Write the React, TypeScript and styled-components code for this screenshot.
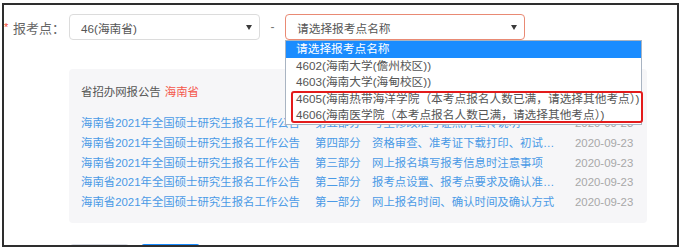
import React from "react";
import styled, { createGlobalStyle } from "styled-components";

const GlobalStyle = createGlobalStyle`
  body {
    margin:0;
    background:#fff;
    font-family:"Liberation Sans", "Noto Sans CJK SC", sans-serif;
  }
`;

const Page = styled.div`
  padding:3px 4px 5px 2px;
`;

const Frame = styled.div`
  box-sizing:border-box;
  width:677px;
  height:244px;
  border:2px solid #2e2e2e;
  overflow:hidden;
  position:relative;
`;

const FormRow = styled.div`
  display:flex;
  align-items:center;
  margin-top:9px;
  height:26px;
`;

const Label = styled.div`
  width:65px;
  display:flex;
  align-items:center;
  font-size:13px;
  color:#666;
`;

const Star = styled.span`
  color:#f2462f;
  font-size:11px;
  width:9px;
  margin-top:-1px;
`;

const SelectWrap = styled.div<{ width: number }>`
  position:relative;
  width:${({ width }) => width}px;
`;

const SelectBox = styled.div<{ focused?: boolean }>`
  box-sizing:border-box;
  height:26px;
  border:1px solid ${({ focused }) => (focused ? "#e98a74" : "#dcdcdc")};
  border-radius:4px;
  display:flex;
  align-items:center;
  justify-content:space-between;
  padding:0 7px 0 11px;
  font-size:11.7px;
  color:#555;
  background:#fff;
`;

const Arrow = styled.span`
  width:0;
  height:0;
  border-left:3px solid transparent;
  border-right:3px solid transparent;
  border-top:5px solid #3a3a3a;
`;

const Dash = styled.span`
  width:25px;
  text-align:center;
  color:#777;
  font-size:12px;
`;

const DropList = styled.ul`
  position:absolute;
  left:0;
  top:26px;
  width:357px;
  margin:0;
  padding:0;
  list-style:none;
  background:#fff;
  border:1px solid #a9b4c2;
  box-sizing:border-box;
  z-index:5;
`;

const DropItem = styled.li<{ active?: boolean }>`
  height:16.5px;
  line-height:16.5px;
  padding-left:10px;
  font-size:11.7px;
  white-space:nowrap;
  color:${({ active }) => (active ? "#fff" : "#555")};
  background:${({ active }) => (active ? "#1a8cff" : "transparent")};
`;

const Highlight = styled.div`
  position:absolute;
  left:5px;
  top:50px;
  width:352px;
  height:32px;
  box-sizing:border-box;
  border:2px solid #e31b1b;
  border-radius:3px;
  pointer-events:none;
`;

const Panel = styled.div`
  box-sizing:border-box;
  margin:29px 0 0 65px;
  width:578px;
  height:154px;
  background:#f6f6f8;
  border-radius:4px;
  padding:13px 0 0 12px;
`;

const PanelTitle = styled.div`
  height:20px;
  line-height:20px;
  font-size:11.4px;
  color:#555;
  margin-bottom:12px;
`;

const Region = styled.span`
  color:#f4564b;
  margin-left:4px;
`;

const NoticeRow = styled.div`
  display:grid;
  grid-template-columns:223px 46px 192px auto;
  column-gap:11px;
  height:19.75px;
  line-height:19.75px;
  font-size:11.4px;
`;

const Cell = styled.span<{ muted?: boolean; clip?: boolean }>`
  color:${({ muted }) => (muted ? "#a8a8a8" : "#4a9ae6")};
  white-space:nowrap;
  ${({ clip }) =>
    clip &&
    `
    overflow:hidden;
    text-overflow:ellipsis;
  `}
`;

const ButtonRow = styled.div`
  display:flex;
  gap:12px;
  margin:21px 0 0 66px;
`;

const Btn = styled.div<{ primary?: boolean }>`
  box-sizing:border-box;
  width:59px;
  height:28px;
  border-radius:3px;
  border:1px solid ${({ primary }) => (primary ? "#1a8cff" : "#dcdfe6")};
  background:${({ primary }) => (primary ? "#1a8cff" : "#fff")};
`;

const options = [
  "请选择报考点名称",
  "4602(海南大学(儋州校区))",
  "4603(海南大学(海甸校区))",
  "4605(海南热带海洋学院（本考点报名人数已满，请选择其他考点）)",
  "4606(海南医学院（本考点报名人数已满，请选择其他考点）)",
];

const notices = [
  ["第五部分", "考生修改准考证照片上传说明"],
  ["第四部分", "资格审查、准考证下载打印、初试时间及考试地点"],
  ["第三部分", "网上报名填写报考信息时注意事项"],
  ["第二部分", "报考点设置、报考点要求及确认准备材料"],
  ["第一部分", "网上报名时间、确认时间及确认方式"],
];

export default function App() {
  return (
    <Page>
      <GlobalStyle />
      <Frame>
        <FormRow>
          <Label>
            <Star>*</Star>报考点：
          </Label>
          <SelectWrap width={191}>
            <SelectBox>
              <span>46(海南省)</span>
              <Arrow />
            </SelectBox>
          </SelectWrap>
          <Dash>-</Dash>
          <SelectWrap width={240}>
            <SelectBox focused>
              <span>请选择报考点名称</span>
              <Arrow />
            </SelectBox>
            <DropList>
              {options.map((o, i) => (
                <DropItem key={o} active={i === 0}>
                  {o}
                </DropItem>
              ))}
              <Highlight />
            </DropList>
          </SelectWrap>
        </FormRow>

        <Panel>
          <PanelTitle>
            省招办网报公告<Region>海南省</Region>
          </PanelTitle>
          {notices.map(([part, title]) => (
            <NoticeRow key={part}>
              <Cell>海南省2021年全国硕士研究生报名工作公告</Cell>
              <Cell>{part}</Cell>
              <Cell clip>{title}</Cell>
              <Cell muted>2020-09-23</Cell>
            </NoticeRow>
          ))}
        </Panel>

        <ButtonRow>
          <Btn />
          <Btn primary />
        </ButtonRow>
      </Frame>
    </Page>
  );
}
